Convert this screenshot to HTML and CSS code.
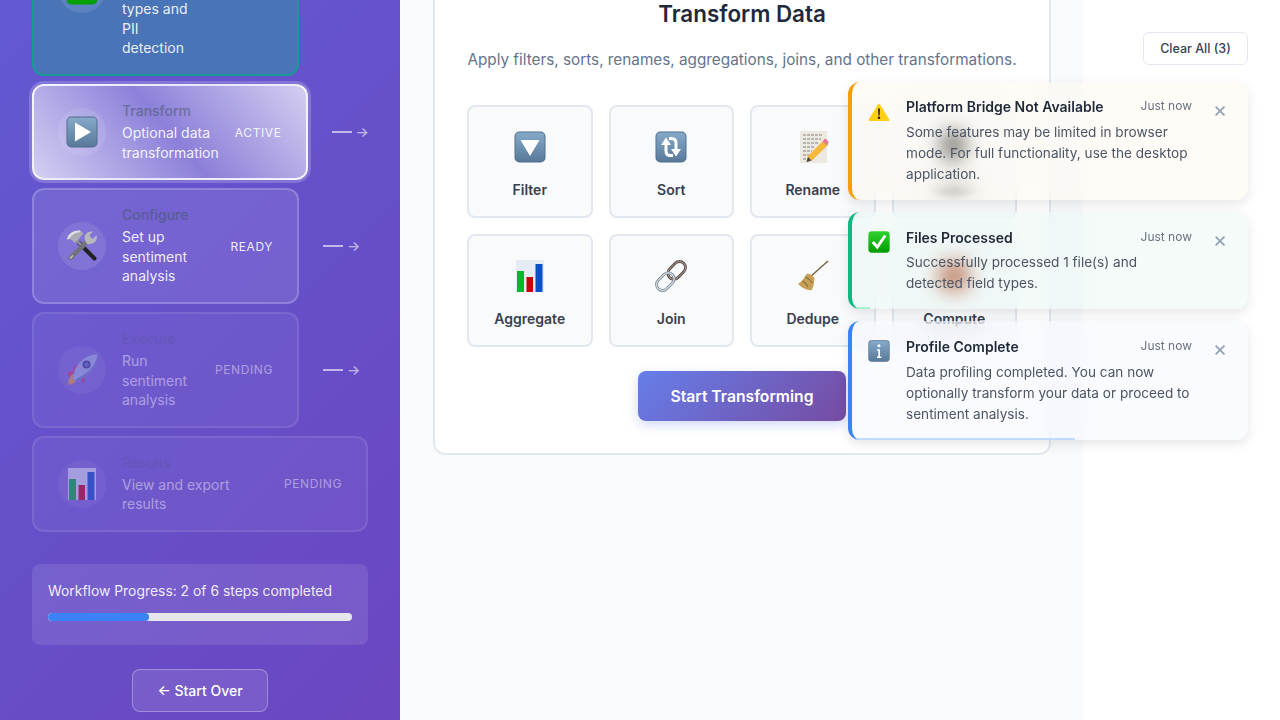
FILE: index.html
```html
<!DOCTYPE html>
<html lang="en">
<head>
    <meta charset="utf-8">
    <title>Transform Data</title>
    <link rel="stylesheet" href="styles.css">
</head>
<body>
    <svg class="icon-defs" width="0" height="0">
        <defs>
            <linearGradient id="keycap" x1="0" y1="0" x2="0" y2="1">
                <stop offset="0" stop-color="#86a9ca"/>
                <stop offset="1" stop-color="#58799a"/>
            </linearGradient>
            <linearGradient id="greencap" x1="0" y1="0" x2="0" y2="1">
                <stop offset="0" stop-color="#2fd32f"/>
                <stop offset="1" stop-color="#009c00"/>
            </linearGradient>
            <symbol id="i-play" viewBox="0 0 32 32">
                <rect x="0.5" y="0.5" width="31" height="31" rx="5" fill="#4f6f8c"/>
                <rect x="1.5" y="1.5" width="29" height="29" rx="4" fill="url(#keycap)"/>
                <path d="M9 6.500 L25 16 L9 25.500 Z" fill="#fff"/>
            </symbol>
            <symbol id="i-filter" viewBox="0 0 32 32">
                <rect x="0.5" y="0.5" width="31" height="31" rx="5" fill="#4f6f8c"/>
                <rect x="1.5" y="1.5" width="29" height="29" rx="4" fill="url(#keycap)"/>
                <path d="M6.500 9 H25.500 L16 25 Z" fill="#fff"/>
            </symbol>
            <symbol id="i-sort" viewBox="0 0 32 32">
                <rect x="0.5" y="0.5" width="31" height="31" rx="5" fill="#4f6f8c"/>
                <rect x="1.5" y="1.5" width="29" height="29" rx="4" fill="url(#keycap)"/>
                <path d="M11 11 V20 Q11 24.500 15.500 24.500 H18" fill="none" stroke="#fff" stroke-width="3"/>
                <path d="M6 14 L11 6.500 L16 14 Z" fill="#fff"/>
                <path d="M21 21 V12 Q21 7.500 16.500 7.500 H14" fill="none" stroke="#fff" stroke-width="3"/>
                <path d="M16 18 L21 25.500 L26 18 Z" fill="#fff"/>
            </symbol>
            <symbol id="i-info" viewBox="0 0 32 32">
                <rect x="0.500" y="0.500" width="31" height="31" rx="5" fill="#4f6f8c"/>
                <rect x="1.500" y="1.500" width="29" height="29" rx="4" fill="url(#keycap)"/>
                <circle cx="16" cy="8.500" r="2.200" fill="#fff"/>
                <path d="M13 13.500 H17.500 V24 H19.500 V26 H13 V24 H15 V15.500 H13 Z" fill="#fff"/>
            </symbol>
            <symbol id="i-check" viewBox="0 0 32 32">
                <rect x="0.500" y="0.500" width="31" height="31" rx="5" fill="url(#greencap)"/>
                <path d="M7 16 L13.500 23.500 L25 6.500" fill="none" stroke="#fff" stroke-width="4.200"/>
            </symbol>
            <symbol id="i-warn" viewBox="0 0 32 32">
                <path d="M16 4 Q17 4 17.800 5.400 L31 27 Q32 29 30 29 H2 Q0 29 1 27 L14.200 5.400 Q15 4 16 4 Z" fill="#fdd017"/>
                <path d="M14.600 11 H17.400 L16.900 21 H15.100 Z" fill="#222"/>
                <circle cx="16" cy="24.300" r="1.800" fill="#222"/>
            </symbol>
            <symbol id="i-chart" viewBox="0 0 32 32">
                <rect x="2" y="0" width="28" height="32" fill="#e4ebf2"/>
                <rect x="3" y="11" width="7" height="21" fill="#00b82c"/>
                <rect x="12.500" y="17" width="6.500" height="15" fill="#c8000a"/>
                <rect x="21.500" y="4" width="7" height="28" fill="#0a50c8"/>
            </symbol>
            <symbol id="i-memo" viewBox="0 0 32 32">
                <rect x="3" y="0" width="27" height="32" fill="#ebe9e2"/>
                <path d="M6 4 H26 M6 8 H24 M6 12 H21 M6 16 H18 M6 20 H15 M6 24 H13 M6 28 H12" stroke="#77776f" stroke-width="0.900" stroke-dasharray="3 1"/>
                <path d="M11 25 L9.500 31 L15 29.500 L31 14 L26.500 9.500 Z" fill="#f4b83a"/>
                <path d="M25.500 10.500 L27.500 8 Q28.500 7.500 29.300 8.300 L31.400 10.500 Q32 11.500 31 12.400 L30 14.500 Z" fill="#e6778c"/>
                <path d="M11 26 L9.500 31 L14.500 29.500 Z" fill="#444"/>
            </symbol>
            <symbol id="i-link" viewBox="0 0 32 32">
                <g fill="none" transform="rotate(-45 16 16)">
                    <rect x="14" y="10" width="20" height="12" rx="6" stroke="#5a4a44" stroke-width="2.800"/>
                    <rect x="14" y="10" width="20" height="12" rx="6" stroke="#b8a8a0" stroke-width="0.900"/>
                    <rect x="-2" y="10" width="20" height="12" rx="6" stroke="#7d8a94" stroke-width="2.800"/>
                    <rect x="-2" y="10" width="20" height="12" rx="6" stroke="#e6edf2" stroke-width="1"/>
                </g>
            </symbol>
            <symbol id="i-broom" viewBox="0 0 32 32">
                <path d="M31 1 L13 17" stroke="#7a5a3a" stroke-width="1.300"/>
                <path d="M9.500 14 Q13 13 17.500 18 Q17.500 23 15 30 Q8 31 1 24 Q6 21 9.500 14 Z" fill="#c6a058"/>
                <path d="M8 17 Q12 18 15 23 M5.500 21 Q9 23 11 27" stroke="#8f6f34" stroke-width="1.200" fill="none"/>
            </symbol>
            <symbol id="i-tools" viewBox="0 0 32 32">
                <path d="M13 13 L28.500 28.500" stroke="#222" stroke-width="4" stroke-linecap="round"/>
                <path d="M10 10 L18 18" stroke="#8c8f94" stroke-width="3"/>
                <path d="M1 9.500 Q3 0.500 14 0.600 L17.500 3.500 L13.500 8 L12 10 L8.500 13 L6 10 Q3.500 8.500 1 9.500 Z" fill="#a9adb3"/>
                <path d="M1 9.500 Q3 0.500 14 0.600 L14.500 2 Q7 2.500 2.800 9 Z" fill="#dcdfe3"/>
                <path d="M4.500 28 L21 11.500" stroke="#6f7378" stroke-width="4.400" stroke-linecap="round"/>
                <path d="M4 28.500 L7 25.500" stroke="#c4c7cb" stroke-width="1.400"/>
                <path d="M20.500 13.500 Q16 6.500 21.500 2.500 Q24 1 27 1.500 L23.500 5.500 L26.500 9 L30.500 5 Q32 10 27.500 13 Q24 15 20.500 13.500 Z" fill="#b4b8bd"/>
            </symbol>
            <symbol id="i-rocket" viewBox="0 0 32 32">
                <path d="M3.500 24 L1 19 L8 16 Q6 12 13 10 Z" fill="#e0406a"/>
                <path d="M14 24 L17 30 L20.500 18 Z" fill="#d63a62"/>
                <path d="M2.500 31 Q1.500 24 7 20 L12 24.500 Q9 30 2.500 31 Z" fill="#f0a63a"/>
                <path d="M7 25 Q8 11 19 4 Q26 0 31.500 0.500 Q32.500 6 28 13 Q21 23 11 27.500 Z" fill="#a9c0e4"/>
                <path d="M11 27.500 Q21 23 28 13 Q32.500 6 31.500 0.500 Q30 12 19 20 Q12 24 9 26 Z" fill="#6a88c4"/>
                <circle cx="20.500" cy="10.500" r="4" fill="#3c3f78"/>
                <circle cx="20.500" cy="10.500" r="2.300" fill="#5a6fc4"/>
            </symbol>
            <symbol id="i-gear" viewBox="0 0 32 32">
                <ellipse cx="15" cy="14" rx="12" ry="16" fill="#1e1e1e"/>
            </symbol>
            <symbol id="i-abacus" viewBox="0 0 32 32">
                <rect x="2" y="2" width="28" height="28" rx="3" fill="#a8340c"/>
            </symbol>
        </defs>
    </svg>

    <div class="app">
        <aside class="sidebar">
            <div class="steps">
                <div class="step-row">
                    <div class="step-card step-done">
                        <div class="step-icon"><svg class="emoji"><use href="#i-check"/></svg></div>
                        <div class="step-text">
                            <div class="step-title">Profile</div>
                            <div class="step-desc">Analyze<br>schema,<br>field<br>types and<br>PII<br>detection</div>
                        </div>
                        <div class="step-status">DONE</div>
                    </div>
                    <div class="step-arrow"><span class="arrow-line"></span><span class="arrow-head">→</span></div>
                </div>
                <div class="step-row">
                    <div class="step-card step-active">
                        <div class="step-icon"><svg class="emoji"><use href="#i-play"/></svg></div>
                        <div class="step-text">
                            <div class="step-title">Transform</div>
                            <div class="step-desc">Optional data transformation</div>
                        </div>
                        <div class="step-status">ACTIVE</div>
                    </div>
                    <div class="step-arrow"><span class="arrow-line"></span><span class="arrow-head">→</span></div>
                </div>
                <div class="step-row">
                    <div class="step-card step-ready">
                        <div class="step-icon"><svg class="emoji"><use href="#i-tools"/></svg></div>
                        <div class="step-text">
                            <div class="step-title">Configure</div>
                            <div class="step-desc">Set up sentiment analysis</div>
                        </div>
                        <div class="step-status">READY</div>
                    </div>
                    <div class="step-arrow"><span class="arrow-line"></span><span class="arrow-head">→</span></div>
                </div>
                <div class="step-row">
                    <div class="step-card step-pending">
                        <div class="step-icon"><svg class="emoji"><use href="#i-rocket"/></svg></div>
                        <div class="step-text">
                            <div class="step-title">Execute</div>
                            <div class="step-desc">Run sentiment analysis</div>
                        </div>
                        <div class="step-status">PENDING</div>
                    </div>
                    <div class="step-arrow"><span class="arrow-line"></span><span class="arrow-head">→</span></div>
                </div>
                <div class="step-row">
                    <div class="step-card step-pending step-last">
                        <div class="step-icon"><svg class="emoji"><use href="#i-chart"/></svg></div>
                        <div class="step-text">
                            <div class="step-title">Results</div>
                            <div class="step-desc">View and export results</div>
                        </div>
                        <div class="step-status">PENDING</div>
                    </div>
                </div>
            </div>

            <div class="progress-box">
                <div class="progress-label">Workflow Progress: 2 of 6 steps completed</div>
                <div class="progress-track"><div class="progress-fill"></div></div>
            </div>

            <button class="start-over">← Start Over</button>
        </aside>

        <main class="main">
            <section class="transform-card">
                <h2 class="transform-title">Transform Data</h2>
                <p class="transform-desc">Apply filters, sorts, renames, aggregations, joins, and other transformations.</p>
                <div class="op-grid">
                    <div class="op-item"><svg class="op-icon"><use href="#i-filter"/></svg><span>Filter</span></div>
                    <div class="op-item"><svg class="op-icon"><use href="#i-sort"/></svg><span>Sort</span></div>
                    <div class="op-item"><svg class="op-icon"><use href="#i-memo"/></svg><span>Rename</span></div>
                    <div class="op-item op-covered"><svg class="op-icon"><use href="#i-gear"/></svg><span>Convert</span></div>
                    <div class="op-item"><svg class="op-icon"><use href="#i-chart"/></svg><span>Aggregate</span></div>
                    <div class="op-item"><svg class="op-icon"><use href="#i-link"/></svg><span>Join</span></div>
                    <div class="op-item"><svg class="op-icon"><use href="#i-broom"/></svg><span>Dedupe</span></div>
                    <div class="op-item"><svg class="op-icon"><use href="#i-abacus"/></svg><span>Compute</span></div>
                </div>
                <div class="transform-actions">
                    <button class="btn-start">Start Transforming</button>
                </div>
            </section>
        </main>
    </div>

    <div class="toast-stack">
        <button class="clear-all">Clear All (3)</button>

        <div class="toast toast-warning">
            <svg class="toast-icon"><use href="#i-warn"/></svg>
            <div class="toast-body">
                <div class="toast-head">
                    <h4 class="toast-title">Platform Bridge Not Available</h4>
                    <span class="toast-time">Just now</span>
                </div>
                <p class="toast-msg">Some features may be limited in browser mode. For full functionality, use the desktop application.</p>
            </div>
            <button class="toast-close">×</button>
        </div>

        <div class="toast toast-success">
            <svg class="toast-icon"><use href="#i-check"/></svg>
            <div class="toast-body">
                <div class="toast-head">
                    <h4 class="toast-title">Files Processed</h4>
                    <span class="toast-time">Just now</span>
                </div>
                <p class="toast-msg">Successfully processed 1 file(s) and detected field types.</p>
            </div>
            <button class="toast-close">×</button>
            <div class="toast-timer timer-success"></div>
        </div>

        <div class="toast toast-info">
            <svg class="toast-icon"><use href="#i-info"/></svg>
            <div class="toast-body">
                <div class="toast-head">
                    <h4 class="toast-title">Profile Complete</h4>
                    <span class="toast-time">Just now</span>
                </div>
                <p class="toast-msg">Data profiling completed. You can now optionally transform your data or proceed to sentiment analysis.</p>
            </div>
            <button class="toast-close">×</button>
            <div class="toast-timer timer-info"></div>
        </div>
    </div>
</body>
</html>
```

FILE: styles.css
```css
* {
    box-sizing: border-box;
}

html,
body {
    margin: 0;
    height: 100%;
    overflow: hidden;
    background: #fff;
    font-family: "Inter", "Liberation Sans", sans-serif;
}

.icon-defs {
    position: absolute;
}

.app {
    display: flex;
    height: 720px;
    overflow: hidden;
}

/* sidebar */
.sidebar {
    width: 400px;
    flex-shrink: 0;
    padding: 0 32px;
    background: linear-gradient(135deg, #6259d2 0%, #6b46c1 100%);
    overflow: hidden;
    display: flex;
    flex-direction: column;
}

.steps {
    display: flex;
    flex-direction: column;
    gap: 8px;
    margin-top: -98.6px;
}

.step-row {
    display: flex;
    align-items: center;
    gap: 24px;
}

.step-card {
    flex: 0 1 auto;
    display: flex;
    align-items: center;
    gap: 16px;
    padding: 16px 24px;
    border: 2px solid rgba(255, 255, 255, 0.2);
    border-radius: 12px;
    background: rgba(255, 255, 255, 0.1);
    color: #fff;
}

.step-last {
    flex: 1;
}

.step-done {
    width: 267px;
    border-color: #1a9a94;
    background: #4a74b8;
}

.step-active {
    border-color: rgba(255, 255, 255, 0.8);
    background: linear-gradient(50deg, rgba(255, 255, 255, 0.72) 0%, rgba(255, 255, 255, 0.26) 50%, rgba(255, 255, 255, 0.72) 100%);
    box-shadow: 0 0 0 3px rgba(255, 255, 255, 0.2);
}

.step-pending {
    opacity: 0.5;
}

.step-icon {
    flex-shrink: 0;
    width: 48px;
    height: 48px;
    border-radius: 50%;
    background: rgba(255, 255, 255, 0.1);
    display: flex;
    align-items: center;
    justify-content: center;
}

.emoji {
    width: 32px;
    height: 32px;
}

.step-text {
    flex: 1 1 auto;
    min-width: 0;
}

.step-title {
    font-size: 14px;
    font-weight: 500;
    line-height: 17px;
    margin-bottom: 4px;
    color: #475569;
    opacity: 0.55;
}

.step-pending .step-title {
    opacity: 0.35;
}

.step-desc {
    font-size: 14px;
    line-height: 1.4;
    color: rgba(255, 255, 255, 0.9);
}

.step-status {
    flex-shrink: 0;
    font-size: 12px;
    font-weight: 400;
    letter-spacing: 0.6px;
    color: rgba(255, 255, 255, 0.9);
}

.step-arrow {
    flex-shrink: 0;
    width: 45px;
    display: flex;
    align-items: center;
    gap: 4px;
    color: rgba(255, 255, 255, 0.6);
}

.arrow-line {
    width: 20px;
    height: 2px;
    background: rgba(255, 255, 255, 0.6);
}

.arrow-head {
    font-size: 14px;
    font-weight: 500;
    line-height: 1;
}

.progress-box {
    margin-top: 32px;
    padding: 17px 16px 24px;
    border-radius: 8px;
    background: rgba(255, 255, 255, 0.1);
    color: rgba(255, 255, 255, 0.9);
}

.progress-label {
    font-size: 13.9px;
    line-height: 21px;
    margin-bottom: 11px;
}

.progress-track {
    height: 8px;
    border-radius: 4px;
    background: #e5e7eb;
    overflow: hidden;
}

.progress-fill {
    width: 33.3%;
    height: 100%;
    border-radius: 4px;
    background: #3b82f6;
}

.start-over {
    align-self: center;
    margin-top: 24px;
    width: 136px;
    height: 43px;
    flex-shrink: 0;
    border: 1px solid rgba(255, 255, 255, 0.3);
    border-radius: 8px;
    background: rgba(255, 255, 255, 0.1);
    color: #fff;
    font-family: inherit;
    font-size: 14px;
    font-weight: 500;
}

/* main */
.main {
    width: 683px;
    flex-shrink: 0;
    background: #f8fafc;
    padding-left: 33px;
}

.transform-card {
    width: 618px;
    height: 495px;
    margin-top: -40px;
    padding: 36.5px 32px 32px;
    background: #fff;
    border: 2px solid #e2e8f0;
    border-radius: 12px;
}

.transform-title {
    margin: 0 0 20.5px;
    text-align: center;
    font-size: 22.4px;
    font-weight: 600;
    line-height: 29px;
    color: #1e293b;
}

.transform-desc {
    margin: 0 0 33px;
    text-align: center;
    font-size: 15.3px;
    line-height: 24px;
    color: #64748b;
}

.op-grid {
    display: grid;
    grid-template-columns: repeat(4, 1fr);
    gap: 16px;
}

.op-item {
    height: 113px;
    display: flex;
    flex-direction: column;
    align-items: center;
    gap: 18px;
    padding-top: 24px;
    border: 2px solid #e2e8f0;
    border-radius: 8px;
    background: #f8fafc;
    font-size: 14px;
    font-weight: 600;
    line-height: 17px;
    color: #374151;
}

/* sits under the warning toast, only a dark smear comes through the blur */
.op-covered span {
    color: transparent;
    background: radial-gradient(ellipse closest-side, rgba(40, 40, 40, 0.75), rgba(40, 40, 40, 0));
    box-shadow: none;
}

.op-icon {
    width: 32px;
    height: 32px;
    flex-shrink: 0;
}

.transform-actions {
    display: flex;
    justify-content: center;
    margin-top: 24px;
}

.btn-start {
    width: 208px;
    height: 50px;
    border: none;
    border-radius: 8px;
    background: linear-gradient(135deg, #667eea 0%, #764ba2 100%);
    color: #fff;
    font-family: inherit;
    font-size: 15.7px;
    font-weight: 600;
    box-shadow: 0 4px 12px rgba(102, 126, 234, 0.3);
}

/* notifications */
.toast-stack {
    position: fixed;
    top: 32px;
    right: 32px;
    width: 400px;
    display: flex;
    flex-direction: column;
    gap: 12px;
}

.clear-all {
    align-self: flex-end;
    width: 105px;
    height: 33px;
    margin-bottom: 5px;
    border: 1px solid #e2e8f0;
    border-radius: 6px;
    background: #fff;
    color: #374151;
    font-family: inherit;
    font-size: 12.5px;
    font-weight: 500;
}

.toast {
    position: relative;
    display: flex;
    align-items: flex-start;
    gap: 16px;
    padding: 16px 16px 15px;
    border-left: 4px solid;
    border-radius: 12px;
    overflow: hidden;
    box-shadow: 0 4px 12px rgba(0, 0, 0, 0.1);
    backdrop-filter: blur(10px);
}

.toast-warning {
    border-color: #f59e0b;
    background: rgba(255, 247, 235, 0.4);
}

.toast-success {
    padding-bottom: 15px;
    border-color: #10b981;
    background: rgba(227, 245, 240, 0.4);
}

.toast-success .toast-head {
    margin-bottom: 5px;
}

.toast-info {
    border-color: #3b82f6;
    background: rgba(242, 245, 255, 0.4);
}

.toast-success .toast-body,
.toast-info .toast-body {
    padding-top: 1px;
}

.toast-icon {
    flex-shrink: 0;
    width: 22px;
    height: 22px;
    margin-top: 3px;
}

.toast-body {
    flex: 1;
    min-width: 0;
}

.toast-head {
    display: flex;
    justify-content: space-between;
    align-items: flex-start;
    margin-bottom: 6px;
}

.toast-title {
    margin: 0;
    font-size: 14px;
    font-weight: 600;
    line-height: 18px;
    color: #1f2937;
}

.toast-time {
    font-size: 12px;
    line-height: 15px;
    color: #6b7280;
}

.toast-msg {
    margin: 0;
    font-size: 13.6px;
    line-height: 21px;
    color: #4b5563;
}

.toast-close {
    flex-shrink: 0;
    width: 24px;
    height: 22px;
    padding: 0;
    border: none;
    background: none;
    color: #94a3b8;
    font-family: inherit;
    font-size: 22px;
    line-height: 22px;
}

.toast-timer {
    position: absolute;
    left: 0;
    bottom: 0;
    height: 2px;
}

.timer-success {
    width: 18px;
    background: #a7f3d0;
}

.timer-info {
    width: 223px;
    background: #bfdbfe;
}
```
